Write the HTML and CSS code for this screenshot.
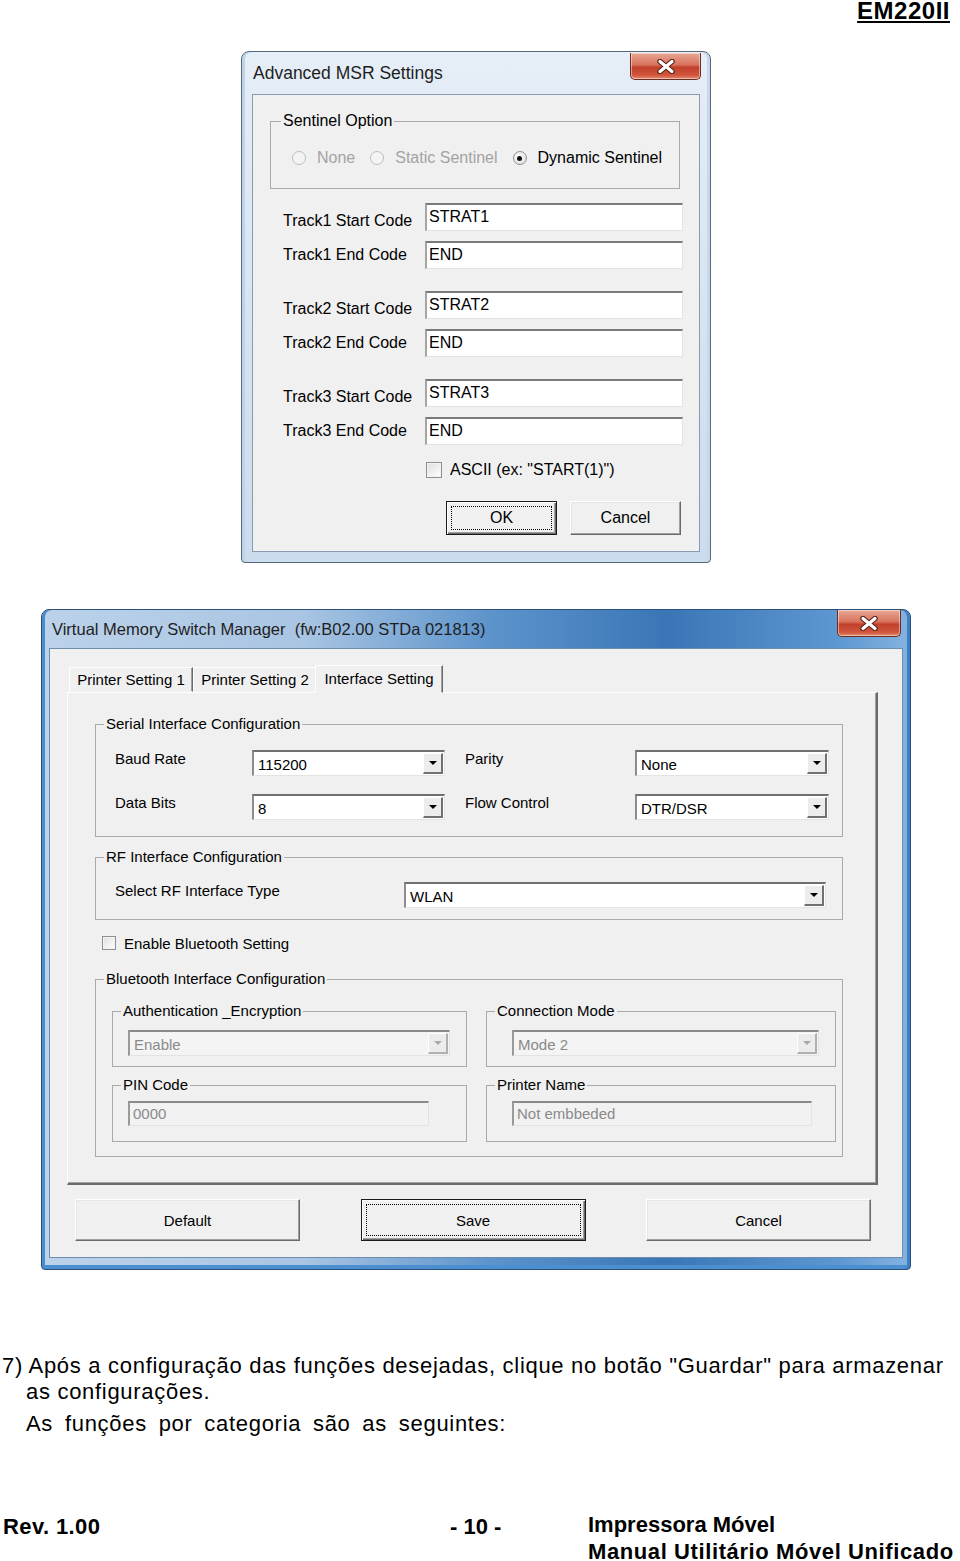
FILE: index.html
```html
<!DOCTYPE html>
<html lang="pt">

<head>
  <meta charset="UTF-8">
  <meta name="viewport" content="width=device-width, initial-scale=1.0">
  <title>EM220II - Manual Utilitário</title>
  <link rel="stylesheet" href="styles.css">
</head>

<body>
  <div class="page">
    <header class="doc-header"><span class="model">EM220II</span></header>

    <!-- Advanced MSR Settings dialog -->
    <div class="win msr">
      <div class="titlebar">
        <span class="title">Advanced MSR Settings</span>
        <span class="close-btn">
          <svg width="20" height="15" viewBox="0 0 20 15">
            <path d="M4 2.5 L16 12.5 M16 2.5 L4 12.5" stroke="#5a2418" stroke-width="5.5" stroke-linecap="round" />
            <path d="M4 2.5 L16 12.5 M16 2.5 L4 12.5" stroke="#fff" stroke-width="3.2" stroke-linecap="round" />
          </svg>
        </span>
      </div>
      <div class="client">
        <fieldset class="group sentinel">
          <legend>Sentinel Option</legend>
          <div class="radios">
            <span class="radio-item disabled"><span class="radio"></span>None</span>
            <span class="radio-item disabled"><span class="radio"></span>Static Sentinel</span>
            <span class="radio-item"><span class="radio checked"></span>Dynamic Sentinel</span>
          </div>
        </fieldset>

        <div class="tracks">
          <div class="track">
            <div class="track-row start"><span class="lbl">Track1 Start Code</span><span class="edit">STRAT1</span></div>
            <div class="track-row"><span class="lbl">Track1 End Code</span><span class="edit">END</span></div>
          </div>
          <div class="track">
            <div class="track-row start"><span class="lbl">Track2 Start Code</span><span class="edit">STRAT2</span></div>
            <div class="track-row"><span class="lbl">Track2 End Code</span><span class="edit">END</span></div>
          </div>
          <div class="track">
            <div class="track-row start"><span class="lbl">Track3 Start Code</span><span class="edit">STRAT3</span></div>
            <div class="track-row"><span class="lbl">Track3 End Code</span><span class="edit">END</span></div>
          </div>
        </div>

        <div class="ascii"><span class="check big"></span>ASCII (ex: "START(1)")</div>

        <div class="msr-buttons">
          <button class="btn default"><span class="focus">OK</span></button>
          <button class="btn">Cancel</button>
        </div>
      </div>
    </div>

    <!-- Virtual Memory Switch Manager dialog -->
    <div class="win vmsm">
      <div class="titlebar">
        <span class="title">Virtual Memory Switch Manager&nbsp; (fw:B02.00 STDa 021813)</span>
        <span class="close-btn">
          <svg width="20" height="15" viewBox="0 0 20 15">
            <path d="M4 2.5 L16 12.5 M16 2.5 L4 12.5" stroke="#5a2418" stroke-width="5.5" stroke-linecap="round" />
            <path d="M4 2.5 L16 12.5 M16 2.5 L4 12.5" stroke="#fff" stroke-width="3.2" stroke-linecap="round" />
          </svg>
        </span>
      </div>
      <div class="client">
        <div class="tabs">
          <span class="tab">Printer Setting 1</span>
          <span class="tab">Printer Setting 2</span>
          <span class="tab active">Interface Setting</span>
        </div>

        <div class="panel">
          <fieldset class="group serial">
            <legend>Serial Interface Configuration</legend>
            <div class="serial-grid">
              <span class="lbl">Baud Rate</span>
              <span class="combo w193"><span class="val">115200</span><span class="drop"></span></span>
              <span></span>
              <span class="lbl">Parity</span>
              <span class="combo w194"><span class="val">None</span><span class="drop"></span></span>

              <span class="lbl">Data Bits</span>
              <span class="combo w193"><span class="val">8</span><span class="drop"></span></span>
              <span></span>
              <span class="lbl">Flow Control</span>
              <span class="combo w194"><span class="val">DTR/DSR</span><span class="drop"></span></span>
            </div>
          </fieldset>

          <fieldset class="group rf">
            <legend>RF Interface Configuration</legend>
            <div class="rf-grid">
              <span class="lbl">Select RF Interface Type</span>
              <span class="combo w422"><span class="val">WLAN</span><span class="drop"></span></span>
            </div>
          </fieldset>

          <div class="bt-enable"><span class="check"></span>Enable Bluetooth Setting</div>

          <fieldset class="group bluetooth">
            <legend>Bluetooth Interface Configuration</legend>
            <div class="bt-grid">
              <fieldset class="group sub auth">
                <legend>Authentication _Encryption</legend>
                <span class="combo disabled w322"><span class="val">Enable</span><span class="drop"></span></span>
              </fieldset>
              <fieldset class="group sub conn">
                <legend>Connection Mode</legend>
                <span class="combo disabled w307"><span class="val">Mode 2</span><span class="drop"></span></span>
              </fieldset>
              <fieldset class="group sub pin">
                <legend>PIN Code</legend>
                <span class="text-edit disabled w301">0000</span>
              </fieldset>
              <fieldset class="group sub pname">
                <legend>Printer Name</legend>
                <span class="text-edit disabled w300">Not embbeded</span>
              </fieldset>
            </div>
          </fieldset>
        </div>

        <div class="vmsm-buttons">
          <button class="btn">Default</button>
          <button class="btn default"><span class="focus">Save</span></button>
          <button class="btn">Cancel</button>
        </div>
      </div>
    </div>

    <div class="notes">
      <p class="first">7) Após a configuração das funções desejadas, clique no botão "Guardar" para armazenar</p>
      <p class="indent">as configurações.</p>
      <p class="indent spaced">As funções por categoria são as seguintes:</p>
    </div>

    <footer class="doc-footer">
      <span class="rev">Rev. 1.00</span>
      <span class="page-no">- 10 -</span>
      <span class="manual"><span class="manual-line">Impressora Móvel</span><span class="manual-line wide">Manual Utilitário Móvel Unificado</span></span>
    </footer>
  </div>
</body>

</html>
```

FILE: styles.css
```css
body {
  margin: 0;
  background: #fff;
  font-family: "Liberation Sans", Arial, sans-serif;
  color: #000;
}

.page {
  width: 960px;
}

/* document header / footer */
.doc-header {
  height: 51px;
  box-sizing: border-box;
  padding-right: 10px;
  text-align: right;
}

.model {
  display: inline-block;
  font-size: 24px;
  line-height: 22px;
  font-weight: bold;
  letter-spacing: 0.5px;
  text-decoration: underline;
  text-decoration-thickness: 2px;
  text-underline-offset: 2px;
}

/* window frames */
.win {
  box-sizing: border-box;
  border: 1px solid #56687c;
  border-radius: 8px 8px 4px 4px;
}

.titlebar {
  display: flex;
  justify-content: space-between;
  align-items: flex-start;
}

.close-btn {
  display: flex;
  align-items: center;
  justify-content: center;
  box-sizing: border-box;
  border: 1px solid #6b2d22;
  border-top: none;
  border-radius: 0 0 5px 5px;
  background: linear-gradient(#e9a895 0%, #d8735d 45%, #c2402a 55%, #d0553c 85%, #e48a6c 100%);
  box-shadow: inset 0 0 0 1px rgba(255, 255, 255, 0.45);
}

.client {
  box-sizing: border-box;
  background: #f0f0f0;
  border: 1px solid #8a9bb0;
}

/* --- Advanced MSR Settings --- */
.msr {
  width: 470px;
  height: 512px;
  margin-left: 241px;
  padding: 0 10px 10px;
  background: linear-gradient(180deg, #e6eef7 0%, #d8e5f2 45%, #cbdcee 100%);
  box-shadow: inset 3px 0 #c0d3e8, inset -3px 0 #c7d8eb;
  font-size: 16px;
}

.msr .titlebar {
  height: 42px;
}

.msr .title {
  padding-left: 1px;
  font-size: 17.5px;
  line-height: 42px;
  color: #1e1e1e;
}

.msr .close-btn {
  width: 71px;
  height: 27px;
  margin-top: 1px;
  margin-right: -1px;
}

.msr .client {
  height: 458px;
  padding: 17px 0 0 17px;
}

.group {
  box-sizing: border-box;
  margin: 0;
  padding: 0 10px;
  min-width: 0;
  border: 1px solid #a9a9a9;
}

.group legend {
  padding: 0 2px;
}

.sentinel {
  width: 410px;
  padding-bottom: 20px;
}

.sentinel legend {
  font-size: 16px;
  line-height: 18px;
}

.radios {
  display: flex;
  align-items: center;
  gap: 15px;
  height: 20px;
  margin-top: 18px;
  padding-left: 11px;
}

.radio-item {
  display: flex;
  align-items: center;
  gap: 11px;
}

.radio-item.disabled {
  color: #a3a3a3;
}

.radio {
  display: inline-flex;
  align-items: center;
  justify-content: center;
  box-sizing: border-box;
  width: 14px;
  height: 14px;
  border: 1px solid #8e8f8f;
  border-radius: 50%;
  background: radial-gradient(circle at 40% 40%, #fff, #d8d8d8);
}

.disabled .radio {
  border-color: #bdbdbd;
  background: #f4f4f4;
}

.radio.checked::after {
  content: "";
  width: 5px;
  height: 5px;
  border-radius: 50%;
  background: #111;
}

.tracks {
  display: flex;
  flex-direction: column;
  gap: 22px;
  margin: 14px 0 0 13px;
}

.track {
  display: flex;
  flex-direction: column;
  gap: 10px;
}

.track-row {
  display: grid;
  grid-template-columns: 142px 258px;
  align-items: center;
  height: 28px;
}

.track-row.start .lbl {
  padding-top: 8px;
}

.edit {
  box-sizing: border-box;
  height: 28px;
  padding-left: 2px;
  border-style: solid;
  border-width: 2px 1px 1px 2px;
  border-color: #7a7a7a #e4e4e4 #e4e4e4 #a5a5a5;
  background: #fff;
  line-height: 24px;
}

.check {
  box-sizing: border-box;
  width: 14px;
  height: 14px;
  border: 1px solid #8e8f8f;
  background: linear-gradient(135deg, #dedede, #fff);
  box-shadow: inset 0 0 0 1px #f4f4f4;
}

.check.big {
  width: 16px;
  height: 16px;
}

.ascii {
  display: flex;
  align-items: center;
  gap: 8px;
  height: 16px;
  margin: 17px 0 0 156px;
}

.msr-buttons {
  display: flex;
  justify-content: flex-end;
  gap: 13px;
  margin: 23px 18px 0 0;
}

.msr-buttons .btn {
  width: 111px;
  height: 34px;
}

/* buttons */
.btn {
  box-sizing: border-box;
  padding: 0;
  font: inherit;
  color: #000;
  background: #f0f0f0;
  border: 1px solid;
  border-color: #fff #6a6a6a #6a6a6a #fff;
  box-shadow: inset -1px -1px #a0a0a0, inset 1px 1px #e6e6e6;
}

.btn.default {
  display: flex;
  border-color: #1a1a1a;
  box-shadow: inset 1px 1px #fff, inset -1px -1px #6a6a6a, inset -2px -2px #a0a0a0;
}

.focus {
  flex: 1;
  display: flex;
  align-items: center;
  justify-content: center;
  margin: 4px;
  border: 1px dotted #000;
}

/* --- Virtual Memory Switch Manager --- */
.vmsm {
  width: 870px;
  height: 661px;
  margin: 46px 0 0 41px;
  padding: 0 7px 11px;
  border-color: #2b4f78;
  background: linear-gradient(90deg, #bcd2ea 0%, #a9c5e3 30%, #5c93cb 52%, #3a76b6 72%, #5e98d2 92%, #86b3e0 100%);
  box-shadow: inset 3px 0 #4a8ccc, inset -3px 0 #3b7fc4, inset 0 -4px #4b8fd0;
  font-size: 15px;
}

.vmsm .titlebar {
  height: 38px;
}

.vmsm .title {
  padding-left: 3px;
  font-size: 16.5px;
  line-height: 38px;
  color: #1e1e1e;
}

.vmsm .close-btn {
  width: 64px;
  height: 27px;
  margin-right: 2px;
}

.vmsm .client {
  height: 610px;
  padding: 16px 0 0 17px;
  border-color: #6f8eae;
}

.tabs {
  display: flex;
  align-items: flex-end;
  height: 27px;
  padding-left: 2px;
}

.tab {
  box-sizing: border-box;
  width: 124px;
  height: 25px;
  border: 1px solid;
  border-color: #fff #6a6a6a transparent #fff;
  box-shadow: inset -1px 0 #a0a0a0;
  text-align: center;
  line-height: 24px;
  white-space: nowrap;
}

.tab.active {
  position: relative;
  z-index: 1;
  width: 128px;
  height: 28px;
  margin: 0 0 -1px -2px;
  background: #f0f0f0;
  line-height: 25px;
}

.panel {
  box-sizing: border-box;
  width: 811px;
  height: 493px;
  padding: 23px 0 0 27px;
  border-style: solid;
  border-width: 1px 2px 2px 1px;
  border-color: #fff #6a6a6a #6a6a6a #fff;
  box-shadow: inset -1px -1px #a0a0a0;
}

.panel .group {
  width: 748px;
  padding: 0 8px;
}

.panel legend {
  line-height: 16px;
}

.lbl {
  white-space: nowrap;
}

.serial {
  padding-bottom: 16px !important;
}

.serial-grid {
  display: grid;
  grid-template-columns: 137px 193px 20px 170px 194px;
  row-gap: 18px;
  margin: 18px 0 0 11px;
}

.serial-grid .lbl,
.rf-grid .lbl {
  padding-top: 1px;
  line-height: 16px;
}

.rf {
  margin-top: 12px;
  padding-bottom: 11px !important;
}

.rf-grid {
  display: grid;
  grid-template-columns: 289px 422px;
  margin: 17px 0 0 11px;
}

.combo {
  display: flex;
  align-items: center;
  box-sizing: border-box;
  height: 26px;
  border-style: solid;
  border-width: 2px 1px 1px 2px;
  border-color: #6f6f6f #e3e3e3 #e3e3e3 #8c8c8c;
  background: #fff;
}

.combo .val {
  flex: 1;
  padding: 2px 0 0 4px;
  line-height: 20px;
}

.combo .drop {
  display: flex;
  align-items: center;
  justify-content: center;
  box-sizing: border-box;
  width: 20px;
  height: 21px;
  margin-right: 1px;
  border-style: solid;
  border-width: 1px 2px 2px 1px;
  border-color: #fff #707070 #707070 #fff;
  background: #ececec;
}

.combo .drop::after {
  content: "";
  border-left: 4px solid transparent;
  border-right: 4px solid transparent;
  border-top: 4px solid #000;
}

.combo.disabled {
  background: #f4f4f4;
  color: #8a8a8a;
  border-color: #8a8a8a #e3e3e3 #e3e3e3 #9a9a9a;
}

.combo.disabled .drop {
  border-color: #fff #b0b0b0 #b0b0b0 #fff;
}

.combo.disabled .drop::after {
  border-top-color: #a8a8a8;
}

.w193 { width: 193px; }
.w194 { width: 194px; }
.w422 { width: 422px; }
.w322 { width: 322px; }
.w307 { width: 307px; }
.w301 { width: 301px; }
.w300 { width: 300px; }

.text-edit {
  display: block;
  box-sizing: border-box;
  height: 25px;
  padding-left: 3px;
  border-style: solid;
  border-width: 2px 1px 1px 2px;
  border-color: #8a8a8a #e3e3e3 #e3e3e3 #9a9a9a;
  background: #f2f2f2;
  line-height: 22px;
}

.text-edit.disabled {
  color: #8a8a8a;
}

.bt-enable {
  display: flex;
  align-items: center;
  gap: 8px;
  height: 14px;
  margin: 16px 0 0 7px;
}

.bluetooth {
  margin-top: 21px;
  padding-bottom: 14px !important;
}

.bt-grid {
  display: grid;
  grid-template-columns: 355px 350px;
  column-gap: 19px;
  row-gap: 10px;
  margin: 16px 0 0 8px;
}

.panel .sub {
  width: auto;
}

.auth,
.conn {
  padding-bottom: 10px !important;
}

.auth .combo,
.conn .combo {
  margin-top: 11px;
}

.pin,
.pname {
  padding-bottom: 15px !important;
}

.pin .text-edit,
.pname .text-edit {
  margin-top: 8px;
}

.auth .combo,
.pin .text-edit {
  margin-left: 7px;
}

.conn .combo,
.pname .text-edit {
  margin-left: 17px;
}

.vmsm-buttons {
  display: flex;
  justify-content: space-between;
  width: 796px;
  margin: 14px 0 0 8px;
}

.vmsm-buttons .btn {
  width: 225px;
  height: 42px;
}

/* text below the screenshots */
.notes {
  margin-top: 83px;
  font-size: 22px;
  line-height: 26px;
  letter-spacing: 0.7px;
}

.notes p {
  margin: 0;
}

.notes .first {
  padding-left: 2px;
  white-space: nowrap;
}

.notes .indent {
  padding-left: 26px;
}

.notes .spaced {
  margin-top: 6px;
  word-spacing: 5px;
}

.doc-footer {
  display: grid;
  grid-template-columns: 447px 138px auto;
  align-items: start;
  margin-top: 75px;
  padding-left: 3px;
  font-size: 22px;
  font-weight: bold;
  line-height: 26px;
}

.rev {
  padding-top: 2px;
  letter-spacing: 0.4px;
}

.page-no {
  padding-top: 2px;
}

.manual {
  display: flex;
  flex-direction: column;
  white-space: nowrap;
}

.manual-line.wide {
  line-height: 24px;
  margin-top: 2px;
  letter-spacing: 0.6px;
}
```
